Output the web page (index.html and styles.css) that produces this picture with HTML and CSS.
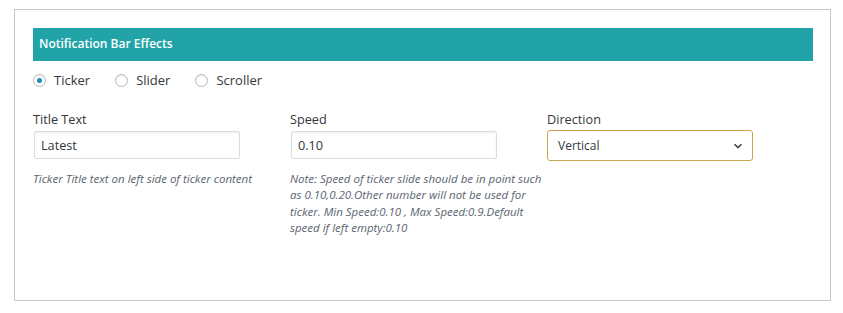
FILE: index.html
```html
<!DOCTYPE html>
<html>
<head>
<meta charset="utf-8">
<link rel="stylesheet" href="styles.css">
</head>
<body>
<div class="panel">
  <div class="panel-header">Notification Bar Effects</div>
  <div class="radios">
    <label class="radio"><span class="dot checked"></span>Ticker</label>
    <label class="radio"><span class="dot"></span>Slider</label>
    <label class="radio"><span class="dot"></span>Scroller</label>
  </div>
  <div class="fields">
    <div class="field">
      <div class="label">Title Text</div>
      <div class="input">Latest</div>
      <p class="help">Ticker Title text on left side of ticker content</p>
    </div>
    <div class="field">
      <div class="label">Speed</div>
      <div class="input">0.10</div>
      <p class="help">Note: Speed of ticker slide should be in point such as 0.10,0.20.Other number will not be used for ticker. Min Speed:0.10 , Max Speed:0.9.Default speed if left empty:0.10</p>
    </div>
    <div class="field">
      <div class="label">Direction</div>
      <div class="select"><span class="select-value">Vertical</span><svg class="chev" width="10" height="6" viewBox="0 0 10 6"><path d="M1.5 1.2 L5 4.6 L8.5 1.2" fill="none" stroke="#32373c" stroke-width="1.4"/></svg></div>
    </div>
  </div>
</div>
</body>
</html>
```
FILE: styles.css
```css
* { box-sizing: border-box; }
body {
  margin: 0;
  background: #fff;
  font-family: "Open Sans", "Noto Sans", sans-serif;
  color: #32373c;
}
.panel {
  margin: 9px 0 0 14px;
  width: 817px;
  height: 292px;
  border: 1px solid #c8c8c8;
  padding: 18px 17px 0 18px;
}
.panel-header {
  background: #21a3a8;
  color: #fff;
  font-weight: 600;
  font-size: 12px;
  height: 33px;
  line-height: 31px;
  padding-left: 6px;
}
.radios {
  display: flex;
  margin-top: 9px;
  height: 20px;
  align-items: center;
}
.radio {
  display: flex;
  align-items: center;
  font-size: 13px;
  color: #32373c;
  margin-right: 25px;
}
.dot {
  width: 13px;
  height: 13px;
  border: 1px solid #b4b9be;
  border-radius: 50%;
  margin-right: 8px;
  position: relative;
  background: #fff;
  box-shadow: inset 0 1px 2px rgba(0,0,0,0.08);
}
.dot.checked::after {
  content: "";
  position: absolute;
  left: 3px;
  top: 3px;
  width: 5px;
  height: 5px;
  border-radius: 50%;
  background: #1e8cbe;
}
.fields {
  display: grid;
  grid-template-columns: 257px 257px 257px;
  margin-top: 20px;
}
.label {
  font-size: 12.7px;
  line-height: 18px;
  color: #32373c;
}
.input {
  margin-top: 3px;
  margin-left: 1px;
  width: 206px;
  height: 28px;
  border: 1px solid #ddd;
  border-radius: 2px;
  box-shadow: inset 0 1px 2px rgba(0,0,0,0.07);
  font-size: 12.7px;
  line-height: 26px;
  padding-left: 6px;
  color: #32373c;
}
.select {
  margin-top: 2px;
  width: 206px;
  height: 31px;
  border: 1px solid #c9a54f;
  border-radius: 3px;
  display: flex;
  align-items: center;
  justify-content: space-between;
  padding: 0 9px 0 10px;
  font-size: 12px;
  color: #32373c;
}
.chev { margin-top: 1px; }
.help {
  margin: 12px 0 0;
  font-size: 11.5px;
  font-style: italic;
  line-height: 16.3px;
  color: #5a6470;
  width: 257px;
}
```
